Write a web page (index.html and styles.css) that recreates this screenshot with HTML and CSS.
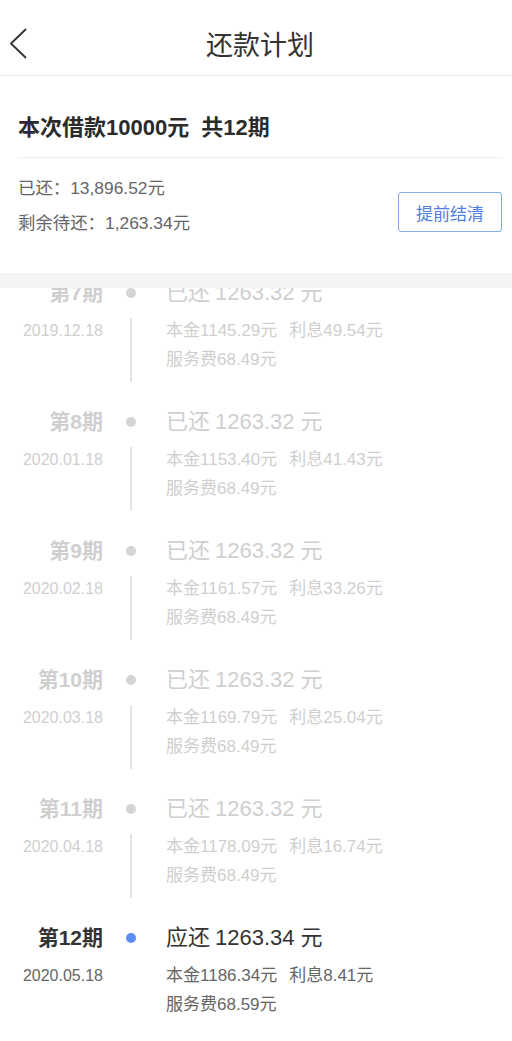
FILE: index.html
```html
<!DOCTYPE html>
<html lang="zh-CN">
<head>
<meta charset="utf-8">
<title>还款计划</title>
<link rel="stylesheet" href="styles.css">
</head>
<body>
<div class="page">
  <header class="topbar">
    <div class="back">
      <svg width="18" height="32" viewBox="0 0 18 32"><polyline points="16.5,1.5 2,15.5 16.5,29.5" fill="none" stroke="#333" stroke-width="1.8" stroke-linecap="round" stroke-linejoin="round"/></svg>
    </div>
    <h1 class="title">还款计划</h1>
    <div></div>
  </header>

  <section class="summary">
    <div class="summary-title">本次借款10000元<span class="sep">共12期</span></div>
    <div class="summary-body">
      <div class="summary-lines">
        <div>已还：13,896.52元</div>
        <div>剩余待还：1,263.34元</div>
      </div>
      <button class="settle">提前结清</button>
    </div>
  </section>

  <div class="band"></div>

  <div class="list">
    <div class="list-inner">
      <div class="item done">
        <div class="period">第7期</div>
        <div class="dot-col"><span class="dot"></span></div>
        <div class="amount">已还<span class="num">1263.32</span>元</div>
        <div class="date">2019.12.18</div>
        <div class="line-col"><span class="vline"></span></div>
        <div class="detail"><div><span class="part">本金1145.29元</span>利息49.54元</div><div>服务费68.49元</div></div>
      </div>
      <div class="item done">
        <div class="period">第8期</div>
        <div class="dot-col"><span class="dot"></span></div>
        <div class="amount">已还<span class="num">1263.32</span>元</div>
        <div class="date">2020.01.18</div>
        <div class="line-col"><span class="vline"></span></div>
        <div class="detail"><div><span class="part">本金1153.40元</span>利息41.43元</div><div>服务费68.49元</div></div>
      </div>
      <div class="item done">
        <div class="period">第9期</div>
        <div class="dot-col"><span class="dot"></span></div>
        <div class="amount">已还<span class="num">1263.32</span>元</div>
        <div class="date">2020.02.18</div>
        <div class="line-col"><span class="vline"></span></div>
        <div class="detail"><div><span class="part">本金1161.57元</span>利息33.26元</div><div>服务费68.49元</div></div>
      </div>
      <div class="item done">
        <div class="period">第10期</div>
        <div class="dot-col"><span class="dot"></span></div>
        <div class="amount">已还<span class="num">1263.32</span>元</div>
        <div class="date">2020.03.18</div>
        <div class="line-col"><span class="vline"></span></div>
        <div class="detail"><div><span class="part">本金1169.79元</span>利息25.04元</div><div>服务费68.49元</div></div>
      </div>
      <div class="item done">
        <div class="period">第11期</div>
        <div class="dot-col"><span class="dot"></span></div>
        <div class="amount">已还<span class="num">1263.32</span>元</div>
        <div class="date">2020.04.18</div>
        <div class="line-col"><span class="vline"></span></div>
        <div class="detail"><div><span class="part">本金1178.09元</span>利息16.74元</div><div>服务费68.49元</div></div>
      </div>
      <div class="item current">
        <div class="period">第12期</div>
        <div class="dot-col"><span class="dot"></span></div>
        <div class="amount">应还<span class="num">1263.34</span>元</div>
        <div class="date">2020.05.18</div>
        <div class="line-col"></div>
        <div class="detail"><div><span class="part">本金1186.34元</span>利息8.41元</div><div>服务费68.59元</div></div>
      </div>
    </div>
  </div>
</div>
</body>
</html>
```

FILE: styles.css
```css
* { box-sizing: border-box; }
html, body { margin: 0; padding: 0; background: #fff; }
body {
  font-family: "Liberation Sans", "Noto Sans CJK SC", sans-serif;
  color: #333;
}
.page { width: 512px; height: 1041px; overflow: hidden; display: flex; flex-direction: column; }

.topbar {
  height: 76px;
  padding-top: 13px;
  display: grid;
  grid-template-columns: 52px 1fr 44px;
  align-items: center;
  border-bottom: 1px solid #e8e8e8;
  flex: none;
}
.back { padding-left: 9px; display: flex; align-items: center; }
.back svg { display: block; }
.title {
  margin: 0;
  text-align: center;
  font-size: 27px;
  font-weight: normal;
  color: #333;
  line-height: 36px;
  font-family: "Noto Sans CJK SC", sans-serif;
}

.summary { padding: 0 10px 0 18px; flex: none; }
.summary-title {
  padding-top: 37px;
  padding-bottom: 14px;
  line-height: 30px;
  font-size: 22px;
  font-weight: bold;
  color: #2b2b2b;
  border-bottom: 1px solid #eeeeee;
}
.summary-title .sep { margin-left: 12px; }
.summary-body {
  display: flex;
  justify-content: space-between;
  align-items: flex-start;
  padding-bottom: 32px;
}
.summary-lines {
  padding-top: 13px;
  font-size: 17.4px;
  line-height: 35px;
  color: #666;
}
.settle {
  margin-top: 34px;
  width: 104px;
  height: 40px;
  border: 1px solid #86a9ec;
  border-radius: 3px;
  background: #fff;
  color: #4f7fe0;
  font-family: "Noto Sans CJK SC", sans-serif;
  font-size: 17px;
  padding: 0;
}

.band { height: 15px; background: #f4f4f4; flex: none; }

.list { flex: 1; overflow: hidden; }
.list-inner { margin-top: -10px; }

.item {
  display: grid;
  grid-template-columns: 103px 56px 1fr;
  grid-template-rows: 30px auto;
  padding-bottom: 25px;
}
.period {
  text-align: right;
  font-size: 21px;
  font-weight: bold;
  line-height: 30px;
}
.dot-col { display: flex; align-items: center; justify-content: center; }
.dot { width: 10px; height: 10px; border-radius: 50%; background: #d4d4d4; }
.amount {
  padding-left: 7px;
  font-size: 22px;
  line-height: 30px;
  white-space: nowrap;
}
.amount .num { margin: 0 6px 0 5px; }
.date {
  margin-top: 8px;
  text-align: right;
  font-size: 16px;
  line-height: 29px;
}
.line-col { margin-top: 8px; display: flex; justify-content: center; padding-top: 2px; }
.vline { width: 2px; height: 64px; background: #e4e4e4; }
.detail {
  margin-top: 8px;
  padding-left: 7px;
  font-size: 17px;
  line-height: 29px;
  white-space: nowrap;
}
.detail .part { margin-right: 12px; }

.done .period, .done .amount, .done .date, .done .detail { color: #cfcfcf; }
.current .period, .current .amount { color: #333; }
.current .date, .current .detail { color: #666; }
.current .dot { background: #5a8ef0; }
```
